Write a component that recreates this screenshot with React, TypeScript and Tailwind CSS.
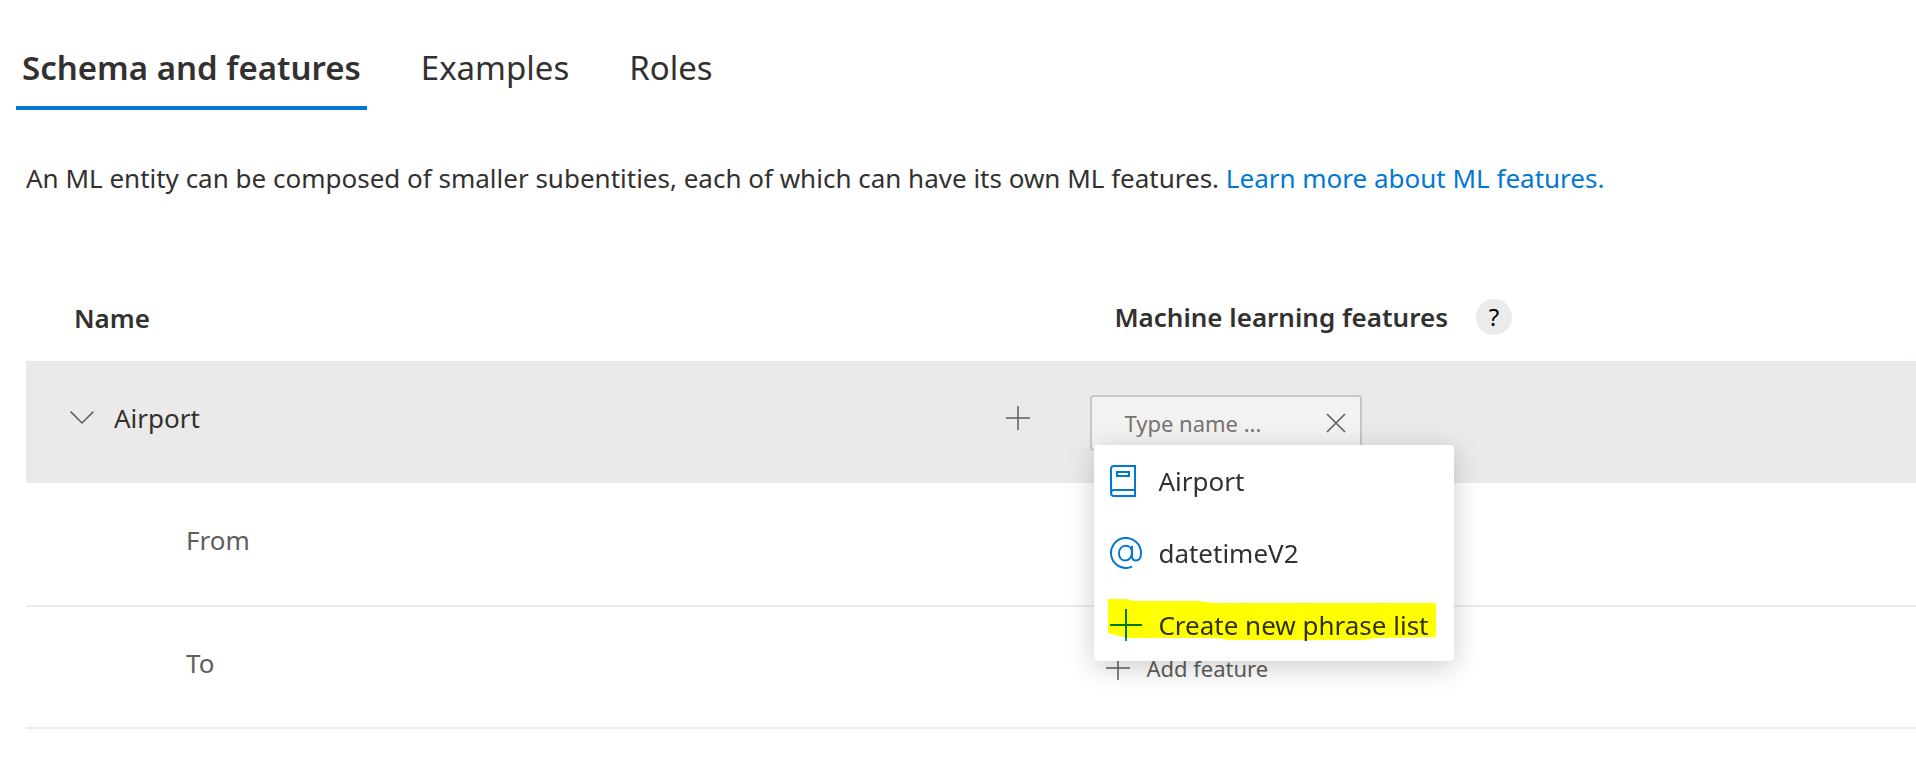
import type { ReactNode } from "react";

function Plus({ className }: { className: string }) {
  return (
    <svg viewBox="0 0 32 32" fill="none" stroke="currentColor" className={className} aria-hidden="true">
      <path d="M16 0v32M0 16h32" strokeWidth="2" />
    </svg>
  );
}

function Chevron() {
  return (
    <svg viewBox="0 0 24 14" fill="none" stroke="currentColor" strokeWidth="1.5" className="h-3.5 w-6" aria-hidden="true">
      <path d="M0.6 0.600l11.4 11.400L23.4 0.600" />
    </svg>
  );
}

function Cross() {
  return (
    <svg viewBox="0 0 20 20" fill="none" stroke="currentColor" strokeWidth="1.6" className="size-5" aria-hidden="true">
      <path d="M1 1l18 18M19 1L1 19" />
    </svg>
  );
}

function Book() {
  return (
    <svg viewBox="0 0 32 32" fill="none" stroke="currentColor" strokeWidth="2" className="size-8" aria-hidden="true">
      <path d="M25 25V1H4a3 3 0 0 0-3 3v24a3 3 0 0 0 3 3h21v-6H4a3 3 0 0 0-3 3" />
      <path d="M7 7h12v4H7z" />
    </svg>
  );
}

function At() {
  return (
    <svg viewBox="0 0 32 32" fill="none" stroke="currentColor" strokeWidth="2" className="size-8" aria-hidden="true">
      <path d="M22 29.7A15 15 0 1 1 31 16c0 4.600-2 7.500-5 7.500-2.700 0-4-1.700-4-4.500V9" />
      <path d="M22 15.500c0 4.600-2.700 8-6.500 8S9 20.600 9 16.700C9 12 11.800 8.800 15.800 8.800c3.600 0 6.200 2.600 6.200 6.700z" />
    </svg>
  );
}

const tabs = ["Schema and features", "Examples", "Roles"];

const suggestions: { label: string; icon: ReactNode; marked?: boolean }[] = [
  { label: "Airport", icon: <Book /> },
  { label: "datetimeV2", icon: <At /> },
  { label: "Create new phrase list", icon: <Plus className="size-8" />, marked: true },
];

function FeatureMenu() {
  return (
    <ul className="absolute top-[50px] left-1 z-10 w-90 rounded-sm bg-white text-[26px] text-[#323130] shadow-[0_6px_28px_rgba(0,0,0,0.2)]">
      {suggestions.map((s) => (
        <li key={s.label}>
          <button type="button" className="relative flex h-18 w-full items-center gap-4 px-4 text-left whitespace-nowrap">
            <span className="shrink-0 text-[#0078d4]">{s.icon}</span>
            <span>{s.label}</span>
            {s.marked && (
              <svg
                viewBox="0 0 328 42"
                preserveAspectRatio="none"
                className="pointer-events-none absolute top-2.5 left-3.5 h-[42px] w-[328px] mix-blend-multiply"
                aria-hidden="true"
              >
                <path fill="#ffff00" d="M0 0h18l8 2h64l16 2h222v34l-60 1-12 2H122l-14-2H20L0 34z" />
              </svg>
            )}
          </button>
        </li>
      ))}
    </ul>
  );
}

export default function App() {
  return (
    <main className="overflow-x-hidden bg-white pt-9 font-['Noto_Sans','Open_Sans',sans-serif] text-[#323130]">
      <nav className="flex gap-12 pl-4 text-[33px]">
        {tabs.map((t, i) => (
          <button
            key={t}
            type="button"
            className={
              i === 0
                ? "h-[74px] border-b-4 border-[#0078d4] px-1.5 pb-1.5 font-semibold"
                : "h-[74px] border-b-4 border-transparent px-1.5 pb-1.5"
            }
          >
            {t}
          </button>
        ))}
      </nav>

      <p className="mt-12 pl-[26px] text-[26px] leading-10">
        An ML entity can be composed of smaller subentities, each of which can have its own ML features.{" "}
        <a href="#ml-features" className="text-[#0078d4]">
          Learn more about ML features.
        </a>
      </p>

      <div className="mt-[73px] pl-[26px]">
        <table className="w-full table-fixed border-collapse text-[26px]">
          <colgroup>
            <col className="w-[56%]" />
            <col />
          </colgroup>
          <thead>
            <tr className="h-[90px] text-left">
              <th scope="col" className="pt-1 pl-12 font-semibold">Name</th>
              <th scope="col" className="pt-0.5 pl-[30px] font-semibold">
                <div className="flex items-center gap-7">
                  Machine learning features
                  <button
                    type="button"
                    aria-label="Help"
                    className="size-9 rounded-full bg-[#edebe9] text-2xl leading-9 font-normal text-black"
                  >
                    ?
                  </button>
                </div>
              </th>
            </tr>
          </thead>
          <tbody>
            <tr className="h-[122px] bg-[#ebeae9]">
              <td className="pr-[54px] pb-2 pl-11">
                <div className="flex items-center justify-between">
                  <div className="flex items-center gap-5">
                    <button type="button" aria-label="Collapse Airport" className="text-[#605e5c]">
                      <Chevron />
                    </button>
                    Airport
                  </div>
                  <button type="button" aria-label="Add subentity" className="text-[#605e5c]">
                    <Plus className="size-6" />
                  </button>
                </div>
              </td>
              <td className="pt-0.5 pl-1.5">
                <div className="relative w-68">
                  <div className="flex h-14 items-center rounded-sm border-2 border-[#c8c6c4] bg-[#f3f2f1] pr-3.5 pl-8">
                    <input
                      type="text"
                      aria-label="Feature name"
                      placeholder="Type name ..."
                      className="min-w-0 flex-1 bg-transparent text-[22px] outline-none placeholder:text-[#767472]"
                    />
                    <button type="button" aria-label="Clear" className="text-[#605e5c]">
                      <Cross />
                    </button>
                  </div>
                  <FeatureMenu />
                </div>
              </td>
            </tr>
            <tr className="h-[123px] border-b-2 border-[#edebe9] text-[#605e5c]">
              <td className="pb-2 pl-40">From</td>
              <td />
            </tr>
            <tr className="h-[122px] border-b-2 border-[#edebe9] text-[#605e5c]">
              <td className="pb-2 pl-40">To</td>
              <td className="pt-0.5 pl-[22px]">
                <button type="button" className="flex items-center gap-4 text-[22px]">
                  <Plus className="size-6" />
                  Add feature
                </button>
              </td>
            </tr>
          </tbody>
        </table>
      </div>
    </main>
  );
}
